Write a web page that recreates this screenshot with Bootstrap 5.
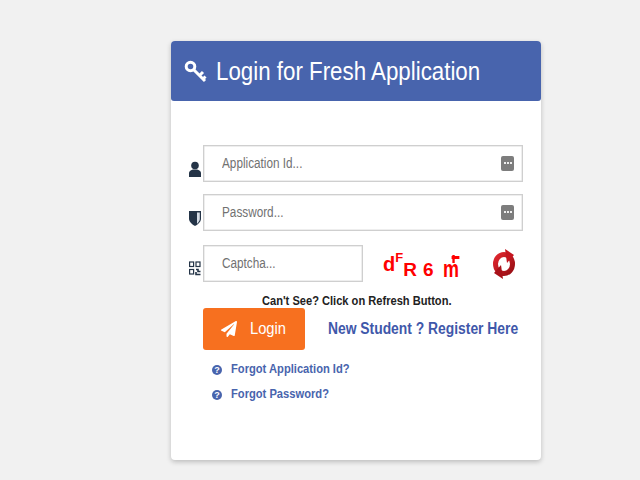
<!DOCTYPE html>
<html lang="en">
<head>
<meta charset="utf-8">
<title>Login for Fresh Application</title>
<link href="https://cdn.jsdelivr.net/npm/bootstrap@5.3.0/dist/css/bootstrap.min.css" rel="stylesheet">
<style>
html,body{height:480px;overflow:hidden}
body{background:#f1f1f1;font-family:"Liberation Sans",Arial,sans-serif;padding:41px 0 0 171px}
.squeeze{display:inline-block;transform-origin:left center;white-space:nowrap}
.login-box{width:370px;height:419px;background:#fff;border:0;border-radius:4px;box-shadow:0 2px 5px rgba(0,0,0,.22)}
.login-head{height:60px;background:#4864ad;color:#fff;border-radius:4px 4px 3px 3px;padding:0 0 0 13px;gap:9px}
.login-head .squeeze{font-size:25.5px;line-height:1;padding-top:1px;transform:scaleX(.875)}
.login-body{padding:44px 18px 0 15px}
.field-row{height:37px;margin-bottom:12px}
.field-row.cap{margin-top:14px;margin-bottom:0}
.side-ico{width:17px;height:37px;flex:none;padding:16px 0 0 3px}
.side-ico svg{display:block}
.fake-input{height:37px;border:1px solid #cfcfcf;box-shadow:inset 0 0 0 .5px #ddd;background:#fff;padding:0 8px 0 18px;color:#717171;font-size:14px;flex:1 1 auto}
.fake-input .squeeze{transform:scaleX(.84)}
.fake-input.short{flex:0 0 160px}
.mask-ico{width:13px;height:15px;background:#7d7d7d;border-radius:2px;gap:1px;padding-bottom:1px}
.mask-ico i{width:2px;height:2px;background:#eee;display:block}
.captcha-txt{width:129px;padding:7px 0 0 20px;color:#f00;font-weight:700;line-height:1}
.captcha-txt b{display:block}
.c1{font-size:20px;transform:translateY(-4px)}
.c2{font-size:13px;transform:translateY(-13px);transform-origin:left;margin-left:0}
.c3{font-size:19px;margin-left:0;transform:translateY(1px)}
.c4{font-size:19px;margin-left:6px;transform:translateY(1px)}
.c5{font-size:23px;margin-left:10px;position:relative;transform:translateY(2px) scaleX(.78);transform-origin:left}
.c5::after{content:"";position:absolute;left:11px;top:-2px;width:10px;height:3px;background:#f00}
.c5::before{content:"";position:absolute;left:12px;top:-3px;width:3px;height:8px;background:#f00}
.cant-see{display:block;font-size:12px;font-weight:700;color:#222;margin:12px 0 0 76px;line-height:14px;transform:scaleX(.925)}
.action-row{margin:0 0 0 17px}
.go-btn{flex:none;width:102px;height:42px;background:#f7701f;color:#fff;border:0;border-radius:3px;font-size:16px;padding:0 0 0 18px;gap:13px}
.go-btn:hover{background:#f7701f;color:#fff}
.go-btn .squeeze{transform:scaleX(.92)}
.reg-link{font-size:16px;font-weight:700;color:#3f58aa;text-decoration:none;margin-left:23px;transform:scaleX(.866)}
.help-row{font-size:12px;font-weight:700;color:#4864ad;text-decoration:none;margin-left:26px;gap:9px;height:25px;line-height:25px}
.help-row .squeeze{transform:scaleX(.93)}
.help-list{margin-top:7px}
</style>
</head>
<body>
<div class="card login-box">
  <div class="login-head d-flex align-items-center">
    <svg width="23" height="23" viewBox="0 0 23 23" fill="none" stroke="#fff"><circle cx="6.500" cy="6.500" r="4.300" stroke-width="3"/><path d="M10 10l11 11M15.500 15.500l3.500-3.500M19 19l2.500-2.500" stroke-width="3"/></svg>
    <span class="squeeze">Login for Fresh Application</span>
  </div>
  <div class="login-body">
    <div class="field-row d-flex">
      <div class="side-ico"><svg width="12" height="16" viewBox="0 0 12 16"><circle cx="6" cy="4.500" r="3.800" fill="#243447"/><path d="M0 16V12C0 10 2 9 4 8.500H8C10 9 12 10 12 12V16Z" fill="#243447"/></svg></div>
      <div class="fake-input d-flex align-items-center justify-content-between"><span class="squeeze">Application Id...</span><span class="mask-ico d-flex align-items-center justify-content-center"><i></i><i></i><i></i></span></div>
    </div>
    <div class="field-row d-flex">
      <div class="side-ico"><svg width="12" height="16" viewBox="0 0 12 16"><path d="M0 1H12V9C12 12 8 15 6 16C4 15 0 12 0 9Z" fill="#243447"/><path d="M8 2.500H10.800V9C10.800 11 9 13 8 13.800Z" fill="#d6dde6"/></svg></div>
      <div class="fake-input d-flex align-items-center justify-content-between"><span class="squeeze">Password...</span><span class="mask-ico d-flex align-items-center justify-content-center"><i></i><i></i><i></i></span></div>
    </div>
    <div class="field-row cap d-flex align-items-center">
      <div class="side-ico"><svg width="12" height="15" viewBox="0 0 12 15" fill="none" stroke="#243447" stroke-width="1.200"><rect x=".6" y="1" width="4" height="4.500"/><rect x="7" y="1" width="4" height="4.500"/><rect x=".6" y="8.500" width="4" height="4.500"/><path d="M7 8.500h2v2h2.500M7 11v2.500h4.500" stroke-width="1.600"/></svg></div>
      <div class="fake-input short d-flex align-items-center"><span class="squeeze">Captcha...</span></div>
      <div class="captcha-txt d-flex align-items-baseline"><b class="c1">d</b><b class="c2">F</b><b class="c3">R</b><b class="c4">6</b><b class="c5">m</b></div>
      <svg width="24" height="30" viewBox="0 0 24 30" fill="none"><defs><linearGradient id="ringfill" x1="0" y1="0" x2="1" y2="1"><stop offset="0" stop-color="#e0262e"/><stop offset="1" stop-color="#980e14"/></linearGradient></defs><ellipse cx="12" cy="15" rx="8.500" ry="9.500" stroke="url(#ringfill)" stroke-width="5"/><path d="M13 0l9 6-7 8Z" fill="#c5151f"/><path d="M11 30L2 24l7-8Z" fill="#a81119"/></svg>
    </div>
    <div class="cant-see squeeze">Can't See? Click on Refresh Button.</div>
    <div class="action-row d-flex align-items-center">
      <button type="button" class="btn go-btn d-flex align-items-center justify-content-start">
        <svg width="16" height="16" viewBox="0 0 512 512" fill="#fff"><path d="M476 3.200L12.500 270.600c-18.100 10.400-15.800 35.600 2.200 43.200L121 358.400l287.300-253.200c5.500-4.900 13.300 2.600 8.600 8.300L176 407v80.500c0 23.600 28.500 32.900 42.500 15.800L282 426l124.600 52.200c14.200 6 30.400-2.900 33-18.200l72-432C515 7.800 493.300-6.800 476 3.200z"/></svg>
        <span class="squeeze">Login</span>
      </button>
      <a href="#" class="reg-link squeeze">New Student ? Register Here</a>
    </div>
    <div class="help-list">
      <a href="#" class="help-row d-flex align-items-center"><svg width="10" height="10" viewBox="0 0 10 10"><circle cx="5" cy="5" r="5" fill="#4864ad"/><text x="5" y="8.300" text-anchor="middle" font-size="9" font-weight="700" font-family="Liberation Sans" fill="#fff">?</text></svg><span class="squeeze">Forgot Application Id?</span></a>
      <a href="#" class="help-row d-flex align-items-center"><svg width="10" height="10" viewBox="0 0 10 10"><circle cx="5" cy="5" r="5" fill="#4864ad"/><text x="5" y="8.300" text-anchor="middle" font-size="9" font-weight="700" font-family="Liberation Sans" fill="#fff">?</text></svg><span class="squeeze">Forgot Password?</span></a>
    </div>
  </div>
</div>
<script src="https://cdn.jsdelivr.net/npm/bootstrap@5.3.0/dist/js/bootstrap.bundle.min.js"></script>
</body>
</html>
